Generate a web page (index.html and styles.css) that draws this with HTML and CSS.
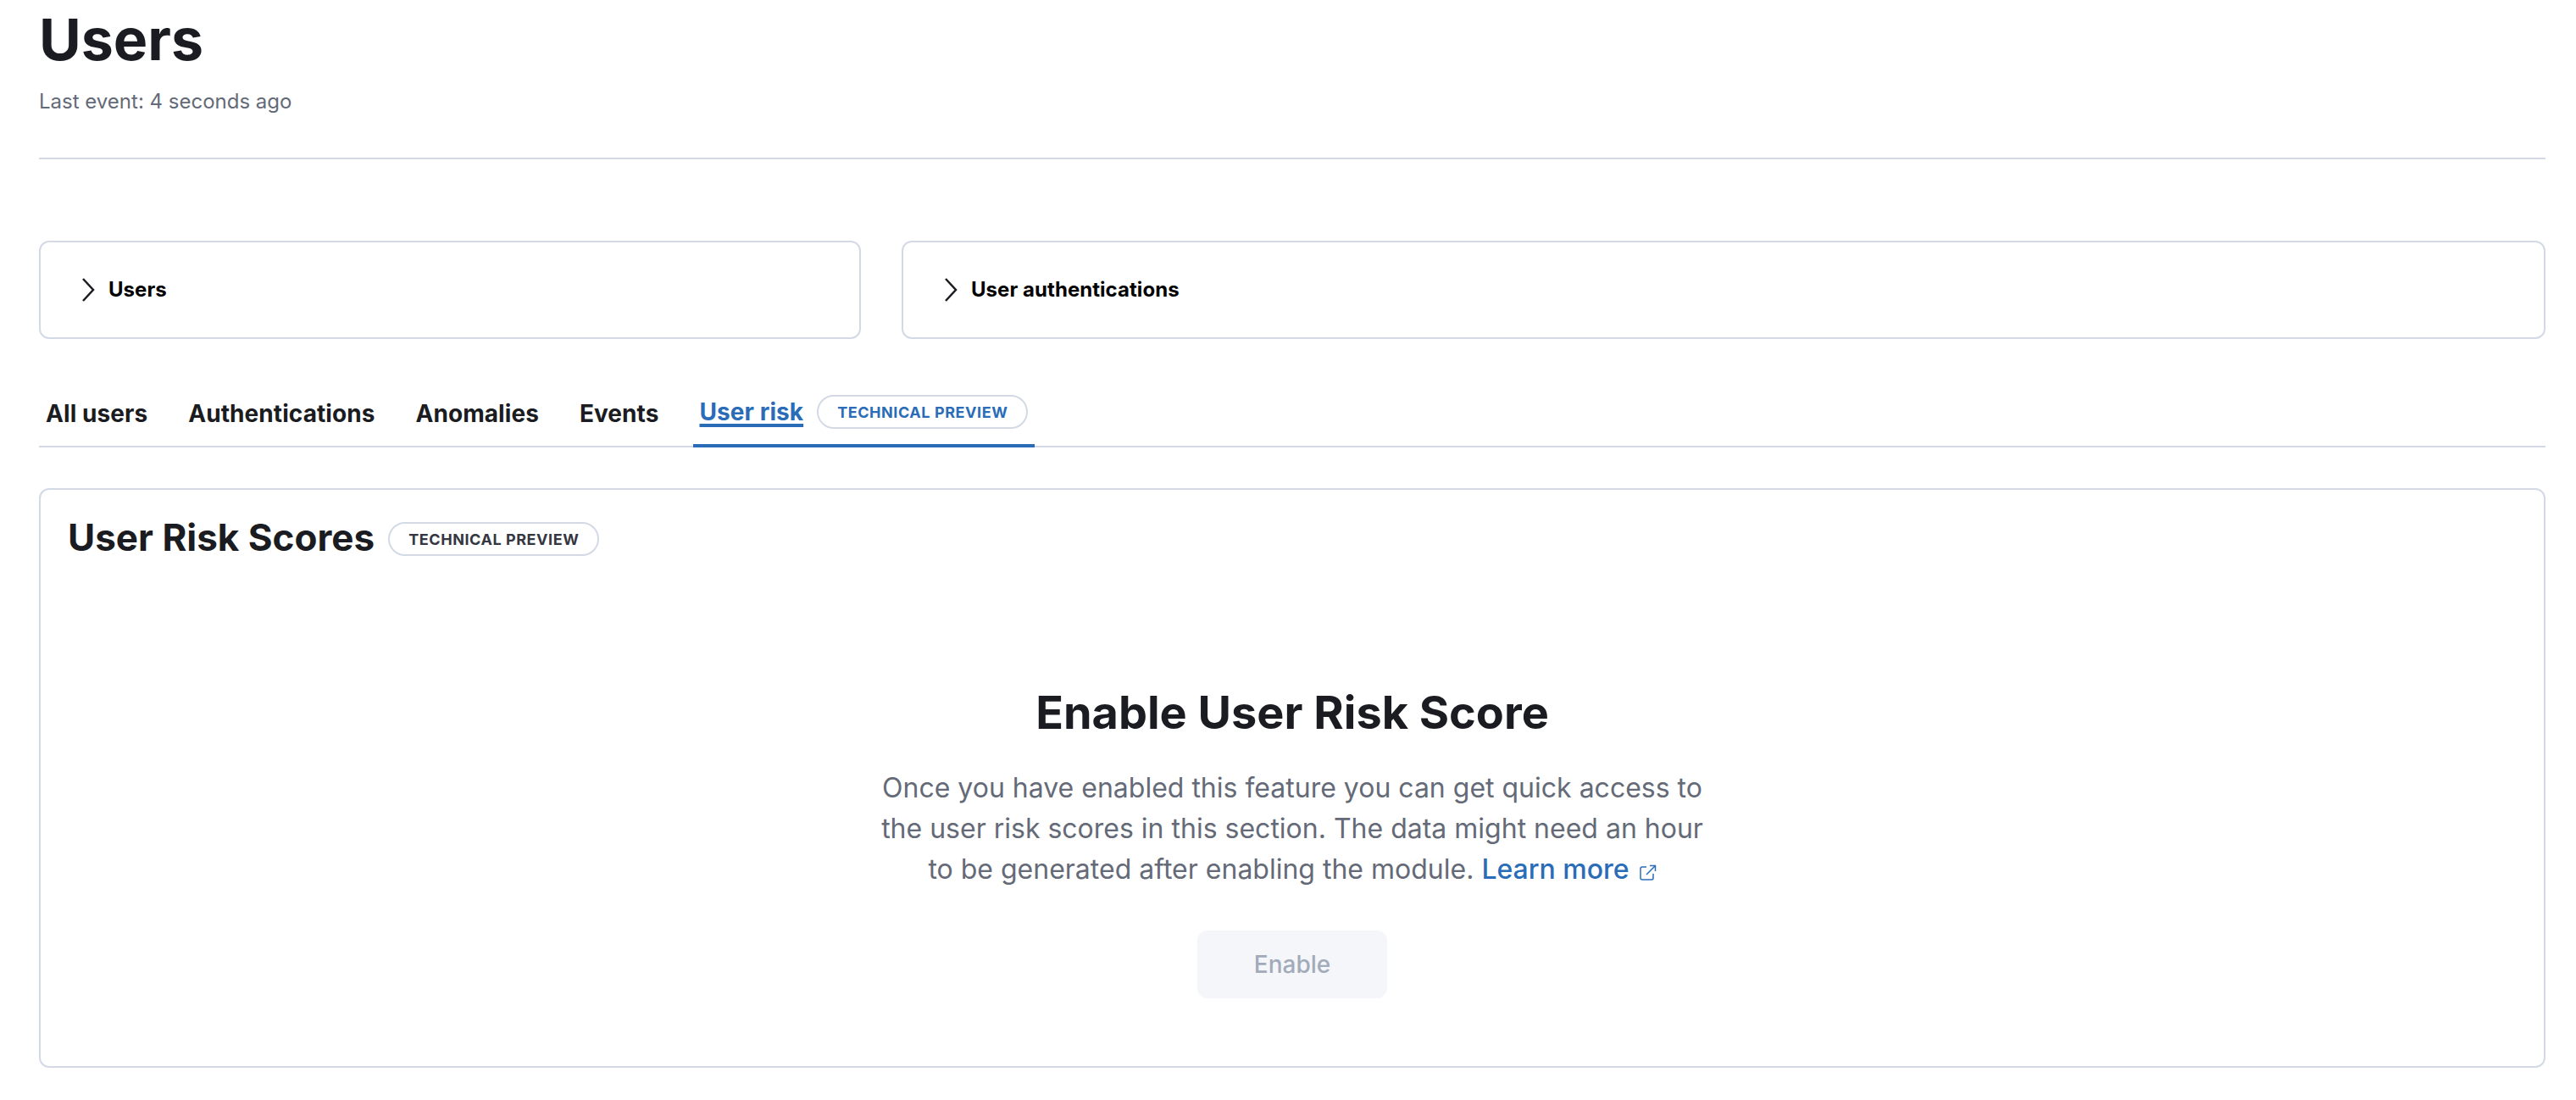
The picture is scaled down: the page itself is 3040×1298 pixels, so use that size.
FILE: index.html
```html
<!DOCTYPE html>
<html lang="en">
<head>
    <meta charset="UTF-8">
    <title>Users</title>
    <link rel="stylesheet" href="styles.css">
</head>
<body>
    <div class="page">
        <header class="page-header">
            <h1>Users</h1>
            <p class="last-event">Last event: 4 seconds ago</p>
        </header>

        <div class="kpis">
            <div class="kpi kpi-users">
                <svg class="chevron" viewBox="0 0 16 32"><path d="M2 3l12 13L2 29" /></svg>
                <span>Users</span>
            </div>
            <div class="kpi kpi-auth">
                <svg class="chevron" viewBox="0 0 16 32"><path d="M2 3l12 13L2 29" /></svg>
                <span>User authentications</span>
            </div>
        </div>

        <div class="tabs">
            <a class="tab">All users</a>
            <a class="tab">Authentications</a>
            <a class="tab">Anomalies</a>
            <a class="tab">Events</a>
            <a class="tab selected"><u>User risk</u><span class="badge badge-blue">TECHNICAL PREVIEW</span></a>
        </div>

        <section class="panel">
            <div class="panel-title">
                <h2>User Risk Scores</h2>
                <span class="badge">TECHNICAL PREVIEW</span>
            </div>
            <div class="empty">
                <h3>Enable User Risk Score</h3>
                <p>Once you have enabled this feature you can get quick access to the user risk scores in this section. The data might need an hour to be generated after enabling the module. <a class="learn">Learn more<svg class="external" viewBox="0 0 20 20"><path d="M8 3H3a2 2 0 0 0-2 2v11a2 2 0 0 0 2 2h11a2 2 0 0 0 2-2v-5" /><path d="M8 12L18 2M12 1.500h6.500V8" /></svg></a></p>
                <button class="enable" disabled>Enable</button>
            </div>
        </section>
    </div>
</body>
</html>
```

FILE: styles.css
```css
* {
    box-sizing: border-box;
}
body {
    font-family: Inter, "Liberation Sans", sans-serif;
    margin: 0;
    background-color: #fff;
    color: #1a1c21;
}
.page {
    padding: 0 36px 0 46px;
    height: 1298px;
    overflow: hidden;
}
.page-header {
    height: 188px;
    border-bottom: 2px solid #d3dae6;
}
h1 {
    margin: 0;
    font-size: 68px;
    line-height: 92px;
    font-weight: 700;
}
.last-event {
    margin: 10px 0 0;
    font-size: 24px;
    line-height: 36px;
    color: #646a77;
}
.kpis {
    display: flex;
    gap: 48px;
    margin-top: 96px;
}
.kpi {
    display: flex;
    align-items: center;
    gap: 16px;
    height: 116px;
    padding-left: 48px;
    border: 2px solid #d3dae6;
    border-radius: 12px;
    font-size: 24px;
    font-weight: 700;
    letter-spacing: 0.050px;
    color: #000;
}
.kpi span {
    padding-bottom: 2px;
}
.kpi-users {
    width: 970px;
}
.kpi-auth {
    flex: 1;
}
.chevron {
    width: 16px;
    height: 32px;
    fill: none;
    stroke: #1a1c21;
    stroke-width: 2.500;
}
.tabs {
    display: flex;
    gap: 32px;
    height: 80px;
    margin-top: 48px;
    border-bottom: 2px solid #d3dae6;
}
.tab {
    display: flex;
    align-items: center;
    height: 80px;
    padding: 0 8px;
    font-size: 28px;
    font-weight: 700;
    letter-spacing: 0.070px;
    color: #1a1c21;
}
.tab.selected {
    color: #2a6cb8;
    border-bottom: 4px solid #2a6cb8;
    gap: 16px;
}
.tab u {
    text-decoration-thickness: 4px;
    text-underline-offset: 4px;
}
.badge {
    display: inline-flex;
    align-items: center;
    height: 40px;
    padding: 0 22px;
    border: 2px solid #d3dae6;
    border-radius: 20px;
    background: #fff;
    font-size: 18px;
    font-weight: 700;
    letter-spacing: 0.560px;
    color: #343741;
}
.badge-blue {
    color: #2a6cb8;
}
.panel {
    height: 684px;
    margin-top: 48px;
    padding: 28px 32px;
    border: 2px solid #d3dae6;
    border-radius: 12px;
}
.panel-title {
    display: flex;
    align-items: center;
    gap: 16px;
}
.panel-title .badge {
    margin-top: 4px;
}
h2 {
    margin: 0;
    font-size: 44px;
    line-height: 56px;
    font-weight: 700;
}
.empty {
    width: 1008px;
    margin: 143px auto 0;
    text-align: center;
}
h3 {
    margin: 0;
    font-size: 54px;
    line-height: 72px;
    font-weight: 700;
}
.empty p {
    margin: 29px 0 0;
    font-size: 32px;
    line-height: 48px;
    color: #646a77;
}
.learn {
    color: #2a6cb8;
    font-weight: 500;
}
.external {
    width: 20px;
    height: 20px;
    margin-left: 12px;
    vertical-align: -3px;
    fill: none;
    stroke: #2a6cb8;
    stroke-width: 1.500;
}
.enable {
    display: block;
    width: 224px;
    height: 80px;
    margin: 48px auto 0;
    border: none;
    border-radius: 12px;
    background-color: #f5f6f9;
    font-family: inherit;
    font-size: 28px;
    font-weight: 500;
    color: #a2abba;
}
```
